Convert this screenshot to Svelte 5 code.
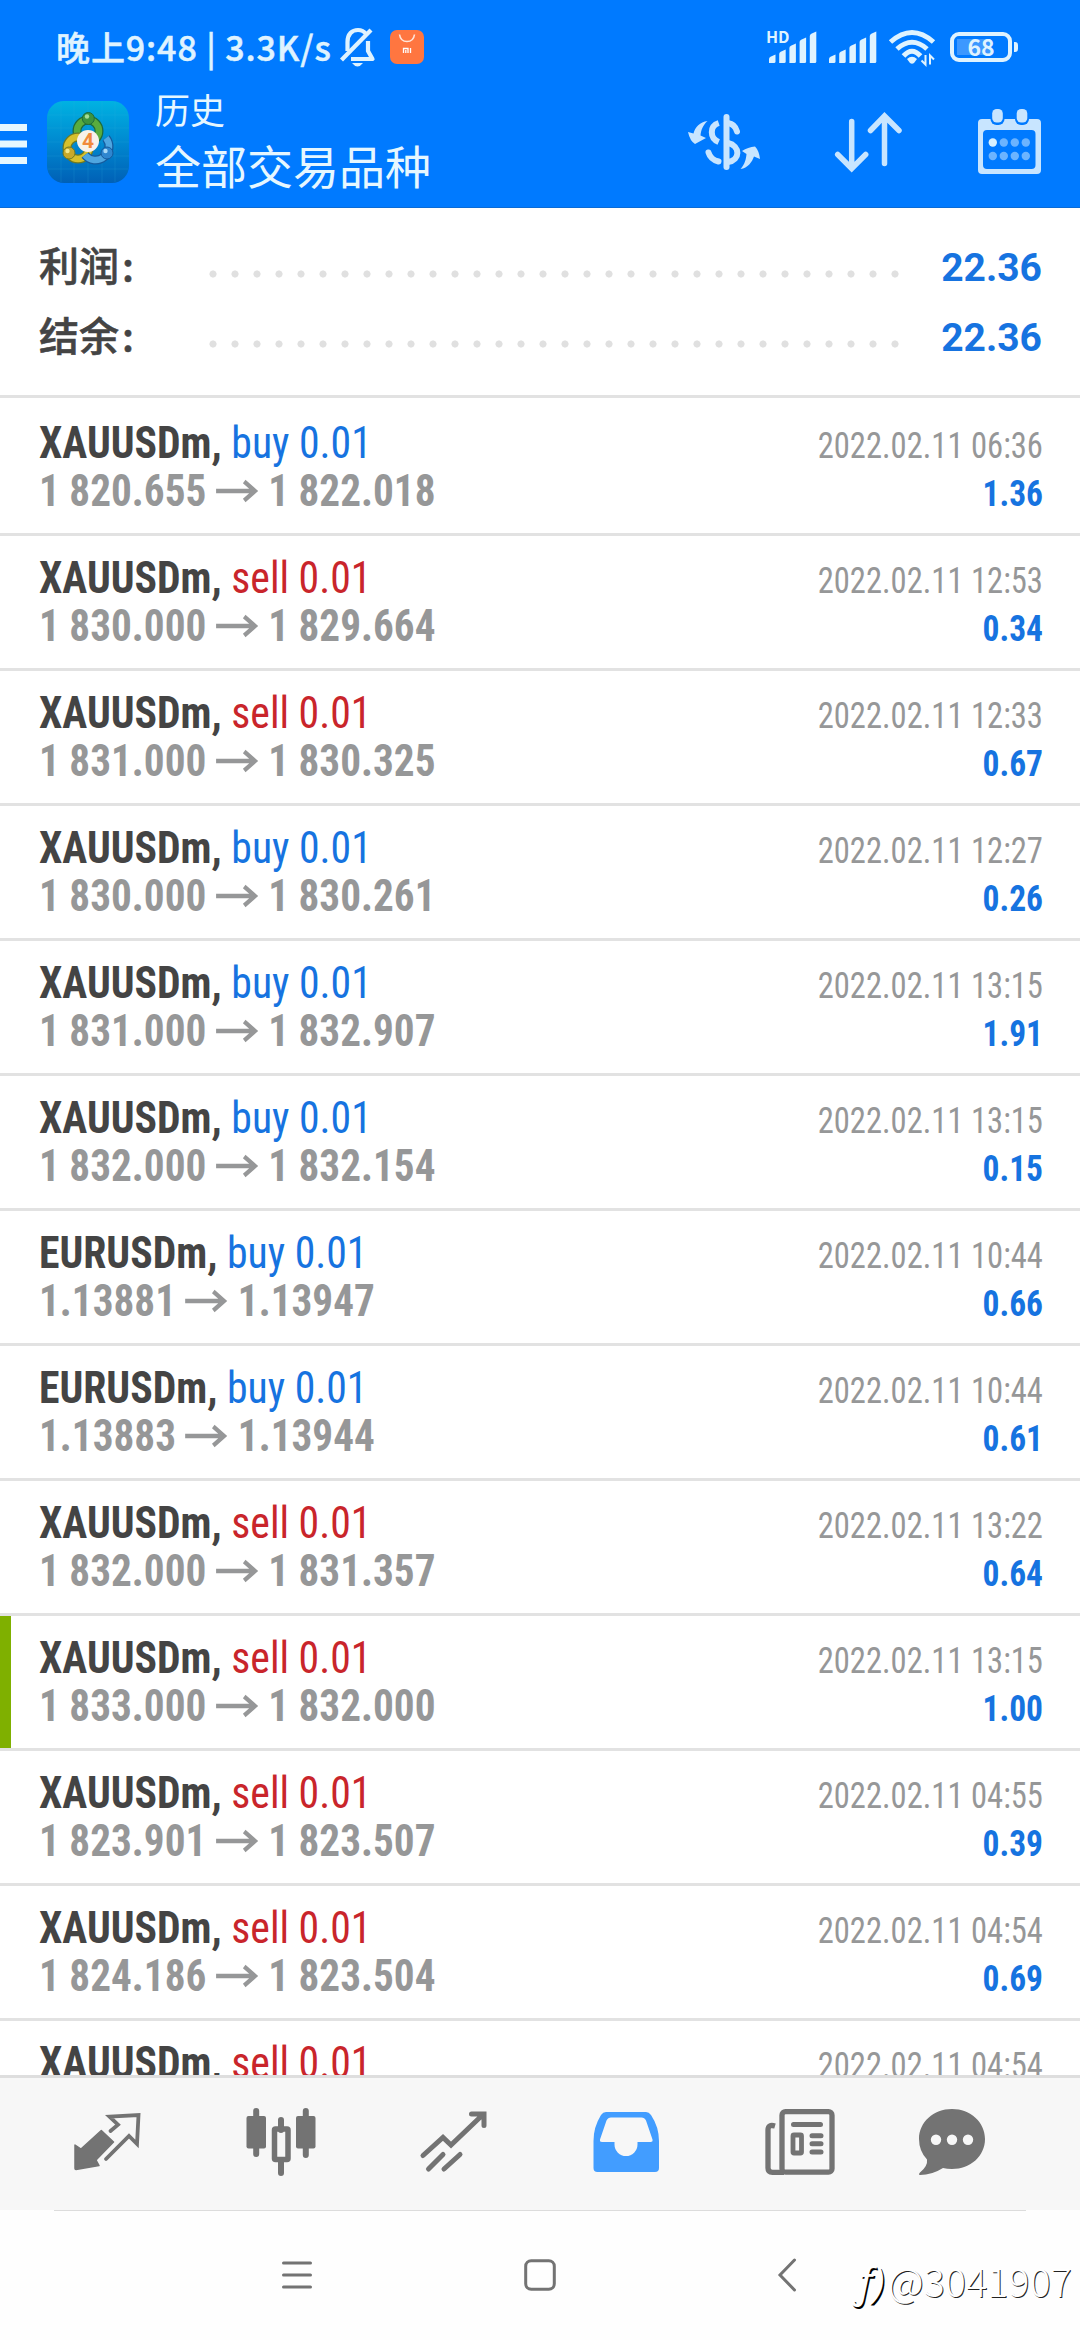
<script>
  const summary = [
    { label: '利润:', value: '22.36' },
    { label: '结余:', value: '22.36' }
  ];

  const deals = [
    { symbol: 'XAUUSDm', side: 'buy', open: '1 820.655', close: '1 822.018', time: '2022.02.11 06:36', profit: '1.36' },
    { symbol: 'XAUUSDm', side: 'sell', open: '1 830.000', close: '1 829.664', time: '2022.02.11 12:53', profit: '0.34' },
    { symbol: 'XAUUSDm', side: 'sell', open: '1 831.000', close: '1 830.325', time: '2022.02.11 12:33', profit: '0.67' },
    { symbol: 'XAUUSDm', side: 'buy', open: '1 830.000', close: '1 830.261', time: '2022.02.11 12:27', profit: '0.26' },
    { symbol: 'XAUUSDm', side: 'buy', open: '1 831.000', close: '1 832.907', time: '2022.02.11 13:15', profit: '1.91' },
    { symbol: 'XAUUSDm', side: 'buy', open: '1 832.000', close: '1 832.154', time: '2022.02.11 13:15', profit: '0.15' },
    { symbol: 'EURUSDm', side: 'buy', open: '1.13881', close: '1.13947', time: '2022.02.11 10:44', profit: '0.66' },
    { symbol: 'EURUSDm', side: 'buy', open: '1.13883', close: '1.13944', time: '2022.02.11 10:44', profit: '0.61' },
    { symbol: 'XAUUSDm', side: 'sell', open: '1 832.000', close: '1 831.357', time: '2022.02.11 13:22', profit: '0.64' },
    { symbol: 'XAUUSDm', side: 'sell', open: '1 833.000', close: '1 832.000', time: '2022.02.11 13:15', profit: '1.00', marked: true },
    { symbol: 'XAUUSDm', side: 'sell', open: '1 823.901', close: '1 823.507', time: '2022.02.11 04:55', profit: '0.39' },
    { symbol: 'XAUUSDm', side: 'sell', open: '1 824.186', close: '1 823.504', time: '2022.02.11 04:54', profit: '0.69' },
    // only the top line fits above the tab bar
    { symbol: 'XAUUSDm', side: 'sell', time: '2022.02.11 04:54' }
  ];

  const bars = [8, 13, 19, 25, 31];
  const dotColumns = [14.8, 25.8, 36.8, 47.8];
</script>

{#snippet signal()}
  <svg width="48" height="31" viewBox="0 0 48 31">
    {#each bars as h, i (i)}
      <path d="M{i * 10.2} 31v-{h - 4}q0-1.5 1.5-2.2l5-2.3v{h - 1}q0 1.5-1.5 1.5z" fill="#dff3ff" />
    {/each}
  </svg>
{/snippet}

<div class="screen">
  <header>
    <div class="status">
      <span class="clock">晚上9:48 | 3.3K/s</span>
      <svg class="bell" width="35" height="39" viewBox="0 0 35 39">
        <g fill="none" stroke="#dff3ff" stroke-width="4.2" stroke-linejoin="round">
          <path d="M7.500 23V14C7.500 6 12 2 18 2c3 0 6 1.200 8 4" />
          <path d="M28 13v10l4.500 8H11" />
          <path d="M1.500 32L31 2" />
        </g>
        <path d="M12 35h11q-5.500 7-11 0z" fill="#dff3ff" />
      </svg>
      <svg class="store" width="34" height="34" viewBox="0 0 34 34">
        <rect width="34" height="34" rx="7" fill="#ff7640" />
        <path d="M9.500 4.500q1 7 7.500 7t7.500-7" fill="none" stroke="#ffe6da" stroke-width="1.600" />
        <path d="M13.500 23v-4.500h4.500V23M15.800 20v3M20.500 18v5" fill="none" stroke="#fff" stroke-width="1.300" />
      </svg>
      <div class="indicators">
        <div class="sim">
          <span class="hd">HD</span>
          {@render signal()}
        </div>
        {@render signal()}
        <svg class="wifi" width="46" height="35" viewBox="0 0 46 35">
          <g fill="none" stroke="#dff3ff" stroke-width="5">
            <path d="M1.500 12Q23-7 44.500 12" />
            <path d="M8 19Q23 5.500 38 19" />
            <path d="M14.500 26Q23 16.500 31.500 26" />
          </g>
          <path d="M18 29q5-4.500 10 0l-3 4q-2 1.500-4 0z" fill="#dff3ff" />
          <path d="M36.500 25v9.500l-4-4M41 34.500V25.500l4 4" fill="none" stroke="#dff3ff" stroke-width="2" />
        </svg>
        <div class="battery">68</div>
      </div>
    </div>

    <div class="appbar">
      <svg class="burger" width="27" height="36" viewBox="0 0 27 36">
        <path d="M0 3.500h27M0 20h27M0 36.500h27" stroke="#e6f7ff" stroke-width="7" />
      </svg>
      <svg class="logo" width="82" height="82" viewBox="0 0 82 82">
        <defs>
          <linearGradient id="tile" x1="0" y1="0" x2="0" y2="1">
            <stop offset="0" stop-color="#00b2e2" />
            <stop offset=".5" stop-color="#0089d0" />
            <stop offset="1" stop-color="#0060b6" />
          </linearGradient>
        </defs>
        <rect width="82" height="82" rx="17" fill="url(#tile)" />
        <path d="M14 1v80M27 0v82M41 0v82M55 0v82M68 1v80M1 14h80M0 27h82M0 41h82M0 55h82M1 68h80" stroke="#2fb0e6" stroke-opacity=".18" />
        <g fill="none">
          <circle cx="41" cy="30" r="11" stroke="#1e6b3c" stroke-width="9" />
          <circle cx="41" cy="30" r="11" stroke="#59ac3e" stroke-width="6.500" />
          <circle cx="31" cy="47" r="11" stroke="#6f7a22" stroke-width="9" />
          <circle cx="31" cy="47" r="11" stroke="#d6c02c" stroke-width="6.500" />
          <path d="M59 37a12 12 0 1 1-21 17" stroke="#155a9c" stroke-width="9" />
          <path d="M59 37a12 12 0 1 1-21 17" stroke="#4fa6e0" stroke-width="6.500" />
        </g>
        <circle cx="41.300" cy="17.500" r="6" fill="#3d9440" stroke="#1e6b3c" />
        <circle cx="40" cy="15.500" r="2.200" fill="#a5dc96" />
        <circle cx="22" cy="52" r="6" fill="#c9a92a" stroke="#6f7a22" />
        <circle cx="20.500" cy="50" r="2.200" fill="#f4e88a" />
        <circle cx="60" cy="52" r="6" fill="#2f86cf" stroke="#155a9c" />
        <circle cx="58.500" cy="50" r="2.200" fill="#a8d9f7" />
        <circle cx="41" cy="40" r="11" fill="#f7f1ea" />
        <text x="41" y="47" text-anchor="middle">4</text>
      </svg>
      <div class="titles">
        <div class="section">历史</div>
        <div class="filter">全部交易品种</div>
      </div>
      <div class="actions">
        <svg width="72" height="56" viewBox="0 0 72 56">
          <g fill="none" stroke="#c8e5ff" stroke-width="6">
            <path d="M38.500 3v50" stroke-linecap="round" />
            <path d="M30.700 9C21.500 12 21.500 24 30.700 28" />
            <path d="M40 9q7 1 9 8.500M20.500 38.500q2 7 10 9" stroke-linecap="round" />
            <path d="M40 29C52.500 32 52.500 46 40 48" />
          </g>
          <path d="M0 18l5.500 1.500C7 13 12 8 19.500 7 15 11 13 16 12.500 21.500L18 24 7 30q-5-3-7-12z" fill="#c8e5ff" />
          <path d="M72 45l-6-2.500C64 48 60 54 52.500 55 57 50 58 45 58.500 40L54 37q6-4 13-4.500 4 4 5 12.500z" fill="#c8e5ff" />
        </svg>
        <svg width="68" height="58" viewBox="0 0 68 58" fill="none" stroke="#c8e5ff" stroke-width="5.500" stroke-linecap="round">
          <path d="M16.700 8.500v46M2.700 41.500l14 14 14-14" />
          <path d="M49.500 50.500v-46M35.500 17.500l14-14.500 14.500 14.500" />
        </svg>
        <svg width="63" height="65" viewBox="0 0 63 65">
          <path fill-rule="evenodd" fill="#c8e5ff" d="M4 10h55q4 0 4 4v47q0 4-4 4H4q-4 0-4-4V14q0-4 4-4zm5 11q-4 0-4 4v31q0 4 4 4h44.500q4 0 4-4V25q0-4-4-4z" />
          {#each [19.5, 44] as x (x)}
            <rect x={x - 7} y="-3" width="14" height="19" rx="6" fill="#007aff" />
            <rect x={x - 5.3} y="0" width="10.600" height="13.500" rx="4.500" fill="#c8e5ff" />
          {/each}
          {#each dotColumns as x, i (x)}
            <circle cx={x} cy="33.500" r="4.200" fill={i === 0 ? '#d8f1ff' : '#6cb4ff'} />
            <circle cx={x} cy="47" r="4.200" fill="#6cb4ff" />
          {/each}
        </svg>
      </div>
    </div>
  </header>

  <section class="summary">
    {#each summary as line (line.label)}
      <div class="summary-line">
        <span class="label">{line.label.slice(0, -1)}<i>:</i></span>
        <span class="dots"></span>
        <span class="total">{line.value}</span>
      </div>
    {/each}
  </section>

  <main>
    {#each deals as deal, i (i)}
      <article class:marked={deal.marked}>
        <div class="line">
          <span class="name"><b>{deal.symbol},</b> <span class={deal.side}>{deal.side} 0.01</span></span>
          <span class="time">{deal.time}</span>
        </div>
        {#if deal.open}
          <div class="line">
            <span class="prices">
              <span>{deal.open}</span>
              <svg width="45" height="22" viewBox="0 0 45 22" fill="none" stroke="#969798" stroke-width="4.300">
                <path d="M0 11h42M30 1.500L41.500 11 30 20.500" />
              </svg>
              <span>{deal.close}</span>
            </span>
            <span class="profit">{deal.profit}</span>
          </div>
        {/if}
      </article>
    {/each}
  </main>

  <nav class="tabs">
    <svg width="67" height="60" viewBox="0 0 67 60">
      <path d="M1 33l6 4L27.300 18.500 39.500 30 22 48l3 5.500L2 57.500q-1 0-1-1z" fill="#737373" stroke="#737373" stroke-width="1.500" stroke-linejoin="round" />
      <path d="M36.500 19l7.500-6.300-8.500-8L64.500 3l-1.500 29-8-8-23 23" fill="none" stroke="#737373" stroke-width="3.800" stroke-linecap="round" />
    </svg>
    <svg width="70" height="68" viewBox="0 0 70 68">
      <g stroke="#737373" stroke-width="6" stroke-linecap="round">
        <path d="M10.200 3v43M59.800 3v44M35 12v10M35 52v13" />
      </g>
      <rect x=".5" y="8" width="19.500" height="32.500" rx="2" fill="#737373" />
      <rect x="50" y="8" width="19.500" height="32.500" rx="2" fill="#737373" />
      <rect x="28.500" y="21" width="13.500" height="30.500" rx="1" fill="none" stroke="#737373" stroke-width="5.500" />
    </svg>
    <svg width="67" height="62" viewBox="0 0 67 62" fill="none" stroke="#737373" stroke-width="5" stroke-linecap="round">
      <path d="M3 44.500l20-18 8 7.500L63 3.500M51.500 3H64v11.500M23 43.500L8.500 58M40 43.500L24 58" />
    </svg>
    <svg width="67" height="60" viewBox="0 0 67 60">
      <path fill-rule="evenodd" fill="#429dff" d="M13 0h40q3 0 5 3 8 12 8 26v27q0 4-4 4H4.500q-4 0-4-4V29Q.5 15 8 3q2-3 5-3zm5 5.500q-3 0-4.500 3L7 27.500q-.5 2.500 2 2.500h12.500v2.500a11.500 11.500 0 0 0 23 0V30h13q2.500 0 2-2.500L53 8.500q-1.500-3-4.500-3z" />
    </svg>
    <svg width="70" height="66" viewBox="0 0 70 66" fill="none" stroke="#737373" stroke-width="5.300">
      <rect x="17" y="2.700" width="50" height="60.500" rx="3.500" />
      <path d="M10 17q-7-2-7 4v38q0 4.300 4.500 4.300H19" />
      <path d="M28.500 15.500h27M47 26.700h9M47 34.700h9M47 43h9" stroke-linecap="round" stroke-width="5" />
      <rect x="28" y="26" width="8.500" height="18" rx="1" stroke-width="4.800" />
    </svg>
    <svg width="108" height="66" viewBox="0 0 108 66">
      <path d="M33 0c18.500 0 33 13 33 30S51.500 60 33 60q-5 0-9-1Q13 66 1 66q-2-.5 0-2.500Q9 57 8 50.500 0 42 0 30C0 13 14.500 0 33 0z" fill="#737373" />
      <circle cx="17" cy="30.700" r="5.200" fill="#f7f7f7" />
      <circle cx="33" cy="30.700" r="5.200" fill="#f7f7f7" />
      <circle cx="49" cy="30.700" r="5.200" fill="#f7f7f7" />
    </svg>
  </nav>

  <footer>
    <svg width="30" height="32" viewBox="0 0 30 32">
      <path d="M1.500 4h27M1.500 16h27M1.500 28h27" stroke="#737373" stroke-width="3" stroke-linecap="round" />
    </svg>
    <svg width="32" height="32" viewBox="0 0 32 32">
      <rect x="1.700" y="1.700" width="28.600" height="28.600" rx="5.500" fill="none" stroke="#737373" stroke-width="3" />
    </svg>
    <svg class="back" width="18" height="34" viewBox="0 0 18 34">
      <path d="M16.500 2L2 17l14.500 15" fill="none" stroke="#737373" stroke-width="3" stroke-linecap="round" />
    </svg>
    <span class="watermark"><i>ƒ)</i>@3041907</span>
  </footer>
</div>

<style>
  .screen {
    display: flex;
    flex-direction: column;
    position: relative;
    width: 1080px;
    height: 2340px;
    overflow: hidden;
    background: #fff;
    font-family: 'Roboto Condensed', Roboto, 'Noto Sans CJK SC', sans-serif;
  }

  svg {
    display: block;
    flex-shrink: 0;
    overflow: visible;
  }

  header {
    height: 208px;
    box-sizing: border-box;
    border-bottom: 1px solid #0a6bd6;
    background: #007aff;
    color: #e6f7ff;
    font-family: 'Noto Sans CJK SC', sans-serif;
  }

  /* Status bar */
  .status {
    display: flex;
    align-items: center;
    height: 76px;
    padding: 18px 62px 0 56px;
    box-sizing: border-box;
    color: #dff3ff;
  }

  .clock {
    width: 284px;
    font-size: 34px;
    font-weight: 500;
    letter-spacing: 0.9px;
    line-height: 40px;
    white-space: nowrap;
    -webkit-text-stroke: 0.5px #dff3ff;
  }

  .store {
    margin-left: 15px;
  }

  .indicators {
    display: flex;
    align-items: center;
    margin-left: auto;
  }

  .sim {
    position: relative;
    margin-right: 12px;
  }

  .hd {
    position: absolute;
    top: -4px;
    left: -3px;
    font-size: 16px;
    font-weight: 700;
    line-height: 16px;
  }

  .wifi {
    margin-left: 12px;
  }

  .battery {
    position: relative;
    width: 62px;
    height: 30px;
    box-sizing: border-box;
    margin: 0 6px 0 15px;
    border: 4px solid #dff3ff;
    border-radius: 9px;
    background: linear-gradient(90deg, #3c98ff 34px, transparent 34px) 3px 3px / 48px 16px no-repeat;
    font-size: 23px;
    font-weight: 700;
    line-height: 21px;
    text-align: center;
  }

  .battery::after {
    content: '';
    position: absolute;
    top: 6px;
    right: -10px;
    width: 4px;
    height: 10px;
    border-radius: 0 3px 3px 0;
    background: #dff3ff;
  }

  /* App bar */
  .appbar {
    display: flex;
    align-items: center;
    height: 131px;
    padding-right: 39px;
  }

  .logo {
    margin-left: 20px;
  }

  .logo text {
    fill: #f08a3c;
    font: 700 21px Roboto, sans-serif;
  }

  .titles {
    margin: 0 0 7px 26px;
  }

  .section {
    font-size: 35px;
    line-height: 52px;
  }

  .filter {
    font-size: 46px;
    line-height: 58px;
  }

  .actions {
    display: flex;
    align-items: center;
    margin-left: auto;
  }

  .actions svg + svg {
    margin-left: 75px;
  }

  /* Totals */
  .summary {
    height: 190px;
    box-sizing: border-box;
    padding: 24px 38px 0 39px;
    border-bottom: 3px solid #e2e2e2;
  }

  .summary-line {
    display: flex;
    align-items: center;
    height: 70px;
  }

  .label {
    width: 170px;
    margin-top: -5px;
    color: #444;
    font-family: 'Noto Sans CJK SC', sans-serif;
    font-size: 40px;
    font-weight: 500;
    line-height: 65px;
    -webkit-text-stroke: 0.6px #444;
  }

  .label i {
    margin-left: 3px;
    font-style: normal;
  }

  .dots {
    width: 704px;
    height: 8px;
    margin-top: 13px;
    background: radial-gradient(circle at 4px 4px, #e0e0e0 3.2px, transparent 3.9px) 0 0 / 22px 8px;
  }

  .total {
    flex: 1;
    margin-top: 2px;
    color: #1673e0;
    font-family: Roboto, sans-serif;
    font-size: 39px;
    font-weight: 700;
    text-align: right;
  }

  /* Deals */
  main {
    flex: 1;
    min-height: 0;
    overflow: hidden;
    padding-top: 3px;
  }

  article {
    height: 135px;
    box-sizing: border-box;
    padding: 18px 37px 0 39px;
    border-bottom: 3px solid #e2e2e2;
  }

  article.marked {
    background: linear-gradient(#7fb000, #7fb000) 0 0 / 11px 100% no-repeat;
  }

  .line {
    display: flex;
    align-items: baseline;
    justify-content: space-between;
    height: 48px;
    line-height: 48px;
    white-space: nowrap;
  }

  /* the figures are set a little narrower than the condensed face */
  .name {
    color: #444;
    font-size: 44px;
    transform: scaleX(0.948);
    transform-origin: left;
  }

  .buy {
    color: #1673e0;
  }

  .sell {
    color: #c9252b;
  }

  .prices {
    display: flex;
    align-items: center;
    color: #969798;
    font-size: 44px;
    font-weight: 700;
    transform: scaleX(0.937);
    transform-origin: left;
  }

  .prices svg {
    margin: 0 11px 0 10px;
  }

  .time {
    color: #969798;
    font-size: 36px;
    transform: scaleX(0.905);
    transform-origin: right;
  }

  .profit {
    color: #1673e0;
    font-size: 36px;
    font-weight: 700;
    transform: scaleX(0.93);
    transform-origin: right;
  }

  /* Bottom tabs */
  .tabs {
    display: grid;
    grid-template-columns: repeat(6, 173px);
    align-items: center;
    justify-items: center;
    height: 135px;
    box-sizing: border-box;
    padding: 0 21px 5px;
    border-top: 3px solid #dedede;
    background: #f7f7f7;
  }

  footer {
    display: grid;
    grid-template-columns: repeat(3, 243px);
    align-items: center;
    justify-content: center;
    justify-items: center;
    height: 130px;
    background: linear-gradient(#dcdcdc, #dcdcdc) 50% 0 / 972px 1px no-repeat #fefefe;
  }

  .back {
    margin-left: 8px;
  }

  .watermark {
    position: absolute;
    right: 8px;
    bottom: 35px;
    color: #fff;
    font: 300 39px/48px 'Noto Sans CJK SC', sans-serif;
    letter-spacing: 0.3px;
    text-shadow: 1px 1px 0 #222;
    white-space: nowrap;
  }

  .watermark i {
    margin-right: 3px;
    font-family: 'Noto Sans', sans-serif;
    font-size: 42px;
    font-weight: 400;
    text-shadow: 1.5px 1.5px 0 #000;
  }
</style>
